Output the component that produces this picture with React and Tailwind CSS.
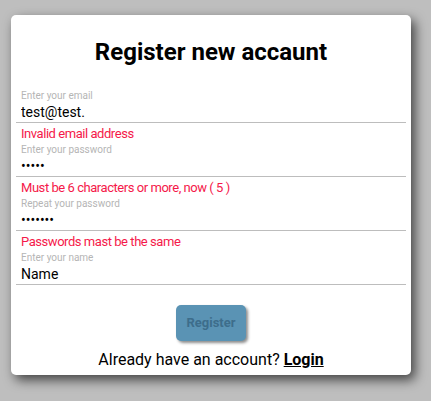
import React from "react";

const fields = [
  { id: "email", label: "Enter your email", type: "text", value: "test@test.", error: "Invalid email address" },
  { id: "password", label: "Enter your password", type: "password", value: "12345", error: "Must be 6 characters or more, now ( 5 )" },
  { id: "repeat", label: "Repeat your password", type: "password", value: "1234567", error: "Passwords mast be the same" },
  { id: "name", label: "Enter your name", type: "text", value: "Name", error: null },
];

function Field({ label, type, value, error }) {
  return (
    <div className="flex flex-col">
      <label className="px-[5px] text-[10px] leading-[12px] text-[#b5b5b5]">{label}</label>
      <input
        type={type}
        defaultValue={value}
        readOnly
        className="h-[21px] px-[5px] text-[14px] text-black border-b border-[#bdbdbd] outline-none bg-transparent"
      />
      {error ? (
        <div className="mt-[3px] mb-[3px] px-[5px] text-[13px] leading-[15px] tracking-[-0.45px] text-[#f5194a]">
          {error}
        </div>
      ) : null}
    </div>
  );
}

export default function App() {
  return (
    <div
      className="min-h-screen bg-[#bebebe] pt-[15px] pl-[11px]"
      style={{ fontFamily: "Roboto, 'Noto Sans', sans-serif" }}
    >
      <div className="w-[400px] h-[360px] bg-white rounded-[5px] px-[5px] flex flex-col shadow-[4px_5px_12px_rgba(0,0,0,0.65)]">
        <h1 className="mt-[23px] text-center text-[24px] leading-[28px] font-bold text-black">
          Register new accaunt
        </h1>

        <div className="mt-[24px] flex flex-col">
          {fields.map((f) => (
            <Field key={f.id} {...f} />
          ))}
        </div>

        <div className="mt-[20px] flex justify-center">
          <button
            type="button"
            className="w-[70px] h-[36px] rounded-[5px] bg-[#5a93b4] text-[13px] font-bold text-[#3d6d8b] shadow-[2px_2px_3px_rgba(0,0,0,0.45)]"
          >
            Register
          </button>
        </div>

        <p className="mt-[9px] text-center text-[16px] leading-[19px] text-black">
          Already have an account? <a className="font-bold underline">Login</a>
        </p>
      </div>
    </div>
  );
}
